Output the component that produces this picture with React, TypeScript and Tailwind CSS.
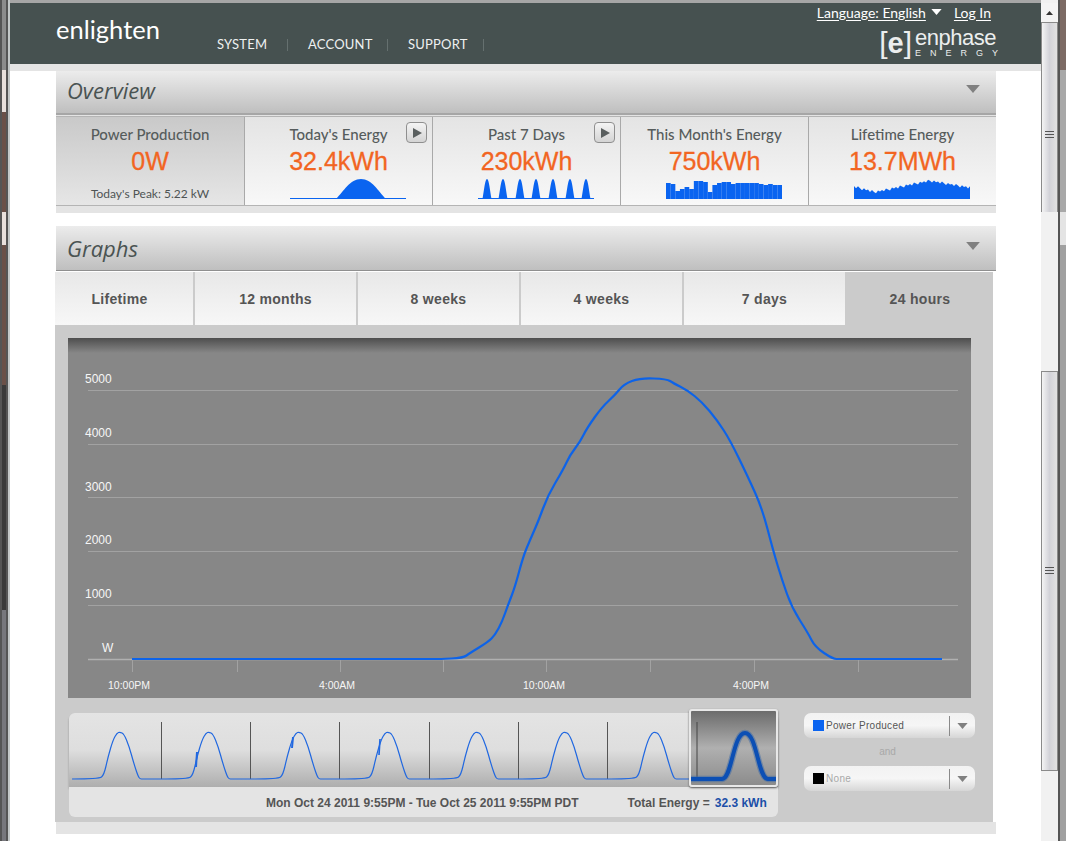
import React from "react";

const BLUE = "#0a64f0";

const curvePts: [number, number][] = [
  [132, 659], [425, 659], [440, 659], [463, 658], [470, 653], [488, 642], [495, 635], [502, 622], [508, 605], [515, 587], [523, 557], [530, 540], [538, 522],
  [548, 495], [563, 470], [570, 455], [580, 442], [587, 428], [602, 407], [615, 395], [624, 384], [640, 378], [667, 379], [673, 383], [687, 390],
  [702, 402], [717, 420], [730, 440], [748, 477], [762, 508], [773, 550], [782, 580], [792, 608], [808, 633], [815, 647], [833, 659], [840, 659], [860, 659], [942, 659],
];

// quadratic through the midpoints so the line doesn't look kinked
function smooth(pts: [number, number][]) {
  let d = `M${pts[0][0]} ${pts[0][1]}`;
  for (let i = 1; i < pts.length - 1; i++) {
    const mx = (pts[i][0] + pts[i + 1][0]) / 2;
    const my = (pts[i][1] + pts[i + 1][1]) / 2;
    d += ` Q${pts[i][0]} ${pts[i][1]} ${mx} ${my}`;
  }
  const last = pts[pts.length - 1];
  return `${d} L${last[0]} ${last[1]}`;
}

const humpShape: [number, number][] = [
  [-21, 779], [-16, 775], [-12, 757], [-7, 740], [-3, 733], [0, 732], [4, 734], [9, 746], [14, 764], [18, 776], [20, 779],
];

const peaks = [120, 209, 299, 388, 477, 565, 655];
const dividers = [161, 250, 339, 429, 518, 607];

function stripPath() {
  const pts: [number, number][] = [[72, 779]];
  peaks.forEach((p) => {
    humpShape.forEach(([dx, y]) => pts.push([p + dx, y]));
    pts.push([p + 23, 779]);
  });
  pts.push([690, 779]);
  return smooth(pts);
}

const monthBars = [16, 15, 8, 10, 12, 10, 18, 18, 17, 7, 14, 16, 17, 17, 15, 16, 16, 16, 16, 16, 15, 14, 15, 14, 14];

function lifetimeArea() {
  const pts: string[] = ["0,21"];
  for (let i = 0; i <= 58; i++) {
    const t = i / 58;
    const env = t < 0.18 ? 13 - t * 30 : t < 0.65 ? 7.6 + (t - 0.18) * 24 : 19 - (t - 0.65) * 20;
    const jag = [0, -2.5, 1, -1, -3, 0.5, -1.5][i % 7];
    pts.push(`${i * 2},${(21 - env - jag * 0.7).toFixed(1)}`);
  }
  pts.push("116,21");
  return pts.join(" ");
}

function Caret({ className }: { className: string }) {
  return (
    <svg viewBox="0 0 12 7" className={className}>
      <polygon points="0,0 12,0 6,7" fill="currentColor" />
    </svg>
  );
}

function SectionHeader({ title, h }: { title: string; h: string }) {
  return (
    <div className={`${h} flex items-center justify-between bg-linear-to-b from-[#ececec] to-[#bfbfbf] pl-[11px] pr-[16px]`}>
      <span className="text-[22px] text-[#4a5352] [font-family:'Open_Sans',sans-serif] italic">{title}</span>
      <Caret className="mb-[4px] h-[8px] w-[14px] text-[#808080]" />
    </div>
  );
}

function PlayButton() {
  return (
    <div className="absolute right-[5px] top-[5px] flex h-[21px] w-[21px] items-center justify-center rounded-[4px] border border-[#8f8f8f] bg-linear-to-b from-[#f4f4f4] to-[#d4d4d4]">
      <svg viewBox="0 0 10 10" className="h-[10px] w-[10px]">
        <polygon points="1,0 10,5 1,10" fill="#5a5f5f" />
      </svg>
    </div>
  );
}

function StatCard({
  title,
  value,
  play,
  last,
  children,
}: {
  title: string;
  value: string;
  play?: boolean;
  last?: boolean;
  children: React.ReactNode;
}) {
  return (
    <div className={`relative flex h-[88px] flex-col items-center bg-linear-to-b from-[#e4e4e4] to-[#f8f8f8] pt-[8px] [font-family:Lato,sans-serif] ${last ? "w-[187px]" : "w-[188px] border-r border-[#a9a9a9]"}`}>
      {play && <PlayButton />}
      <div className="text-[15px] font-medium leading-[18px] text-[#565c5c]">{title}</div>
      <div className="mt-[3px] text-[25px] leading-[30px] text-[#f26522] [font-family:'Liberation_Sans',sans-serif] [-webkit-text-stroke:0.3px_#f26522]">{value}</div>
      <div className="ml-[18px] mt-[2px]">{children}</div>
    </div>
  );
}

function Overview() {
  return (
    <section className="ml-[46px] w-[940px]">
      <SectionHeader title="Overview" h="h-[42px] pb-[3px]" />
      <div className="h-[2px] bg-[#a6a6a6]" />
      <div className="h-[98px] bg-[#e4e4e4] pt-[1px]">
        <div className="flex border-y border-[#b4b4b4]">
          <div className="flex h-[88px] w-[189px] flex-col items-center border-r border-[#a9a9a9] bg-linear-to-b from-[#c9c9c9] to-[#e6e6e6] pt-[8px] [font-family:Lato,sans-serif]">
            <div className="text-[15px] font-medium leading-[18px] text-[#565c5c]">Power Production</div>
            <div className="mt-[3px] text-[25px] leading-[30px] text-[#f26522] [font-family:'Liberation_Sans',sans-serif] [-webkit-text-stroke:0.3px_#f26522]">0W</div>
            <div className="mt-[10px] text-[12px] leading-[16px] text-[#4e5454]">Today's Peak: 5.22 kW</div>
          </div>
          <StatCard title="Today's Energy" value="32.4kWh" play>
            <svg viewBox="0 0 116 22" className="h-[22px] w-[116px]">
              <rect x="0" y="20" width="116" height="1" fill={BLUE} />
              <path d="M46 21 C54 13 60 1 71 1 C82 1 88 13 96 21 Z" fill={BLUE} />
            </svg>
          </StatCard>
          <StatCard title="Past 7 Days" value="230kWh" play>
            <svg viewBox="0 0 116 22" className="h-[22px] w-[116px]">
              <rect x="0" y="20" width="116" height="1" fill={BLUE} />
              {[9, 25, 42, 58, 75, 92, 108].map((x) => (
                <path key={x} d={`M${x - 4.5} 21 C${x - 3} 13 ${x - 2} 1 ${x} 1 C${x + 2} 1 ${x + 3} 13 ${x + 4.5} 21 Z`} fill={BLUE} />
              ))}
            </svg>
          </StatCard>
          <StatCard title="This Month's Energy" value="750kWh">
            <svg viewBox="0 0 116 22" className="h-[22px] w-[116px]">
              {monthBars.map((b, i) => (
                <rect key={i} x={i * 4.64} y={21 - b} width="4.7" height={b} fill={BLUE} />
              ))}
            </svg>
          </StatCard>
          <StatCard title="Lifetime Energy" value="13.7MWh" last>
            <svg viewBox="0 0 116 22" className="h-[22px] w-[116px]">
              <polygon points={lifetimeArea()} fill={BLUE} />
            </svg>
          </StatCard>
        </div>
      </div>
    </section>
  );
}

const tabs = [
  { label: "Lifetime", w: "w-[140px] pr-[9px]" },
  { label: "12 months", w: "w-[163px]" },
  { label: "8 weeks", w: "w-[163px]" },
  { label: "4 weeks", w: "w-[163px]" },
  { label: "7 days", w: "w-[163px]" },
];

function MainChart() {
  const grid = [390, 444, 497, 551, 605, 659];
  const yLabels = [
    ["5000", 383],
    ["4000", 437],
    ["3000", 491],
    ["2000", 544],
    ["1000", 598],
  ] as const;
  const ticks = [132, 237, 340, 443, 546, 650, 754, 858];
  const xLabels = [
    ["10:00PM", 129],
    ["4:00AM", 337],
    ["10:00AM", 544],
    ["4:00PM", 751],
  ] as const;
  return (
    <div className="ml-[13px] h-[360px] w-[903px] bg-[#878787]">
      <svg viewBox="68 338 903 360" className="block h-[360px] w-[903px] [font-family:'Liberation_Sans',sans-serif]">
        <defs>
          <linearGradient id="chartTop" x1="0" y1="0" x2="0" y2="1">
            <stop offset="0" stopColor="#4e4e4e" />
            <stop offset="1" stopColor="#878787" />
          </linearGradient>
        </defs>
        <rect x="68" y="338" width="903" height="15" fill="url(#chartTop)" />
        {grid.map((y) => (
          <line key={y} x1="88" x2="958" y1={y + 0.5} y2={y + 0.5} stroke={y === 659 ? "#b0b0b0" : "#a2a2a2"} strokeWidth={y === 659 ? 1.5 : 1} />
        ))}
        {ticks.map((x) => (
          <line key={x} x1={x + 0.5} x2={x + 0.5} y1="660" y2="672" stroke="#a2a2a2" />
        ))}
        {yLabels.map(([t, y]) => (
          <text key={t} x="85" y={y} fill="#f6f6f6" fontSize="12">
            {t}
          </text>
        ))}
        <text x="102" y="652" fill="#f6f6f6" fontSize="12">
          W
        </text>
        {xLabels.map(([t, x]) => (
          <text key={t} x={x} y="689" fill="#f6f6f6" fontSize="10.5" textAnchor="middle">
            {t}
          </text>
        ))}
        <path d={smooth(curvePts)} fill="none" stroke="#0d63e8" strokeWidth="2.2" strokeLinejoin="round" />
      </svg>
    </div>
  );
}

function Timeline() {
  return (
    <div className="relative ml-[14px] w-[709px]">
      <div className="h-[74px] rounded-t-[6px] bg-linear-to-b from-[#e4e4e4] via-[#dedede] to-[#aeaeae] shadow-[0_2px_2px_#8f8f8f]">
        <svg viewBox="69 713 709 74" className="block h-[74px] w-[709px]">
          {dividers.map((x) => (
            <line key={x} x1={x + 0.5} x2={x + 0.5} y1="722" y2="779" stroke="#555" />
          ))}
          <path d={stripPath()} fill="none" stroke="#2168e0" strokeWidth="1.2" />
          <line x1="197" x2="196" y1="752" y2="767" stroke="#2168e0" strokeWidth="2" />
          <line x1="293" x2="292" y1="737" y2="748" stroke="#2168e0" strokeWidth="2" />
          <line x1="380" x2="379" y1="739" y2="755" stroke="#2168e0" strokeWidth="1.6" />
        </svg>
      </div>
      <div className="flex h-[30px] items-center rounded-b-[6px] bg-[#e4e4e4] pl-[197px] pt-[2px] text-[12px] font-bold text-[#555] [font-family:'Liberation_Sans',sans-serif]">
        <span>Mon Oct 24 2011 9:55PM - Tue Oct 25 2011 9:55PM PDT</span>
        <span className="ml-[49px]">Total Energy =</span>
        <span className="ml-[5px] text-[#1b4fa8]">32.3 kWh</span>
      </div>
      {/* selected day sits on top of the strip */}
      <div className="absolute -top-[4px] right-0 h-[78px] w-[89px] overflow-hidden rounded-[3px] border-2 border-[#e8e8e8] bg-linear-to-b from-[#6c6c6c] via-[#b0b0b0] to-[#8c8c8c] shadow-[0_1px_2px_#555]">
        <svg viewBox="691 711 85 74" className="block h-[74px] w-[85px]">
          <line x1="697" x2="697" y1="722" y2="780" stroke="#444" />
          <path d="M691 779 L722 779 C732 779 733 733 745 733 C757 733 758 779 768 779 L776 779" fill="none" stroke="#3b6aa8" strokeOpacity="0.5" strokeWidth="6.5" />
          <path d="M691 779 L722 779 C732 779 733 733 745 733 C757 733 758 779 768 779 L776 779" fill="none" stroke="#0c4fb4" strokeWidth="4" />
        </svg>
      </div>
    </div>
  );
}

function SeriesSelect({ swatch, label, muted }: { swatch: string; label: string; muted?: boolean }) {
  return (
    <div className="flex h-[25px] w-[171px] items-center rounded-[7px] bg-linear-to-b from-[#f2f2f2] via-[#f6f6f6] to-[#d6d6d6] pl-[9px]">
      <div className={`h-[11px] w-[11px] ${swatch}`} />
      <span className={`ml-[2px] w-[123px] text-[10px] tracking-[0.3px] [font-family:'Liberation_Sans',sans-serif] ${muted ? "text-[#a8a8a8]" : "text-[#555]"}`}>
        {label}
      </span>
      <div className="h-[20px] w-px bg-[#8a8a8a]" />
      <Caret className="ml-[7px] h-[6px] w-[11px] text-[#808080]" />
    </div>
  );
}

function Graphs() {
  return (
    <section className="ml-[45px] mt-[13px] w-[941px]">
      <SectionHeader title="Graphs" h="ml-[1px] h-[45px] w-[940px] border-b border-[#8f8f8f]" />
      <div className="mt-[1px] flex h-[53px] w-[938px] text-[14px] font-bold tracking-[0.3px] text-[#555] [font-family:'Liberation_Sans',sans-serif]">
        {tabs.map((t) => (
          <div key={t.label} className={`${t.w} flex items-center justify-center border-r-2 border-[#cbcbcb] bg-linear-to-b from-[#e8e8e8] to-[#f7f7f7] pt-[2px]`}>
            {t.label}
          </div>
        ))}
        <div className="flex w-[146px] items-center justify-center bg-[#cbcbcb] pt-[2px]">24 hours</div>
      </div>
      <div className="h-[497px] w-[938px] bg-[#cbcbcb] pt-[13px]">
        <MainChart />
        <div className="mt-[15px] flex">
          <Timeline />
          <div className="ml-[26px] flex flex-col">
            <SeriesSelect swatch="bg-[#0a64f0]" label="Power Produced" />
            <div className="my-[6px] h-[16px] pr-[4px] text-center text-[10px] leading-[16px] text-[#a8a8a8] [font-family:'Liberation_Sans',sans-serif]">and</div>
            <SeriesSelect swatch="bg-black" label="None" muted />
          </div>
        </div>
      </div>
      <div className="ml-[1px] h-[12px] w-[940px] bg-[#e4e4e4]" />
    </section>
  );
}

function Header() {
  return (
    <header className="flex h-[61px] bg-[#465150] text-white">
      <div className="w-[161px] pl-[46px] pt-[9px] text-[25.5px] leading-[34px] [font-family:Lato,sans-serif]">enlighten</div>
      <nav className="ml-[46px] mt-[35px] flex h-[14px] items-center text-[13px] tracking-[0.2px] text-[#eef0f0] [font-family:Lato,sans-serif]">
        <span className="w-[70px]">SYSTEM</span>
        <span className="h-[12px] w-px bg-[#65706f]" />
        <span className="w-[99px] pl-[20px]">ACCOUNT</span>
        <span className="h-[12px] w-px bg-[#65706f]" />
        <span className="w-[95px] pl-[20px]">SUPPORT</span>
        <span className="h-[12px] w-px bg-[#65706f]" />
      </nav>
      <div className="ml-auto mr-[45px] flex flex-col items-end">
        <div className="mt-[1px] flex h-[16px] items-center pr-[5px] text-[14px] [font-family:Lato,sans-serif]">
          <span className="underline underline-offset-2">Language: English</span>
          <Caret className="ml-[5px] h-[6px] w-[11px] text-white" />
          <span className="ml-[12px] underline underline-offset-2">Log In</span>
        </div>
        <div className="mt-[8px] flex items-center text-[#eceeee] [font-family:'Liberation_Sans',sans-serif]">
          <span className="text-[30px] leading-[30px]">[</span>
          <span className="text-[29px] font-bold leading-[30px]">e</span>
          <span className="text-[30px] leading-[30px]">]</span>
          <div className="ml-[3px] flex w-[81px] flex-col">
            <span className="text-[22px] leading-[20px] tracking-[-0.5px]">enphase</span>
            <span className="text-[9px] leading-[10px] tracking-[9px]">ENERGY</span>
          </div>
        </div>
      </div>
    </header>
  );
}

function Grip() {
  return (
    <svg viewBox="0 0 9 7" className="h-[7px] w-[9px]">
      <path d="M0 .5H9M0 3.5H9M0 6.5H9" stroke="#555" />
    </svg>
  );
}

function Scrollbar() {
  return (
    <div className="flex w-[17px] flex-col bg-[#f1f1f1] pt-[3px]">
      <div className="flex h-[19px] items-center justify-center bg-[#f4f4f4]">
        <svg viewBox="0 0 7 4" className="h-[4px] w-[7px]">
          <polygon points="3.5,0 7,4 0,4" fill="#333" />
        </svg>
      </div>
      <div className="flex h-[190px] flex-col items-center border-x border-t border-[#8a8a8a] bg-linear-to-r from-[#f4f4f4] via-[#d2d2d8] to-[#e2e2e2] pt-[108px]">
        <Grip />
      </div>
      <div className="mt-[159px] flex h-[400px] flex-col items-center border border-[#8a8a8a] bg-linear-to-r from-[#f4f4f4] via-[#d2d2d8] to-[#e2e2e2] pt-[195px]">
        <Grip />
      </div>
    </div>
  );
}

export default function App() {
  return (
    <div className="flex h-[841px] w-[1066px] overflow-hidden bg-white">
      {/* edge of the window behind the browser */}
      <div className="flex w-[8px] flex-col border-x-2 border-[#555]">
        <div className="h-[70px] bg-[#8c8c8c]" />
        <div className="h-[42px] bg-[#e8e0dc]" />
        <div className="h-[100px] bg-[#6a5048]" />
        <div className="h-[33px] bg-[#e8e0dc]" />
        <div className="h-[140px] bg-[#6a5048]" />
        <div className="h-[225px] bg-[#3a3a3a]" />
        <div className="flex-1 bg-[#77777c]" />
      </div>
      <div className="w-[2px] bg-[#c4c8c8]" />
      <main className="w-[1031px]">
        <div className="h-[3px] bg-[#a6a6a6]" />
        <Header />
        <div className="h-[7px] bg-[#e4e4e4]" />
        <Overview />
        <Graphs />
      </main>
      <Scrollbar />
      <div className="flex w-[8px] flex-col border-l-2 border-[#555]">
        <div className="h-[70px] bg-[#7c6a64]" />
        <div className="h-[142px] bg-[#a8a8a8]" />
        <div className="h-[33px] bg-[#e4e4e4]" />
        <div className="flex-1 bg-[#a0a0a0]" />
      </div>
    </div>
  );
}
